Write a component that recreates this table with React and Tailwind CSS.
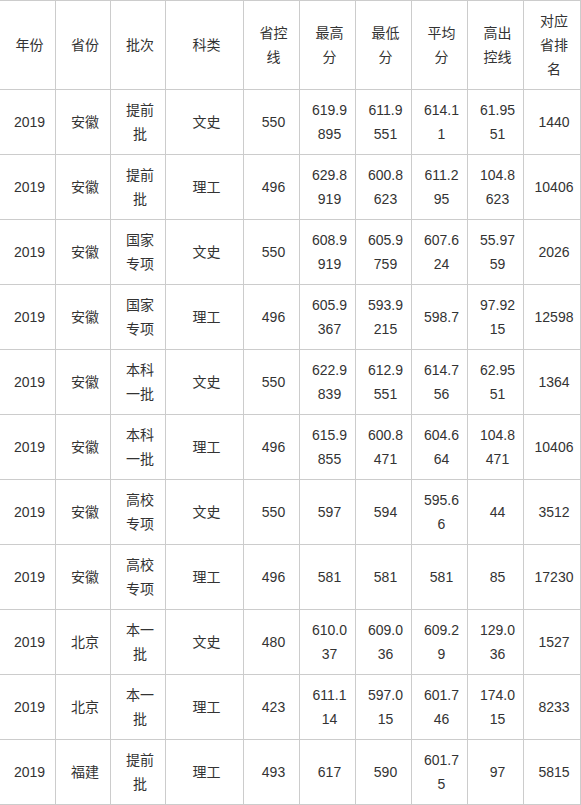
import React from 'react';

const headers = ['年份', '省份', '批次', '科类', '省控线', '最高分', '最低分', '平均分', '高出控线', '对应省排名'];

const rows = [
    ['2019', '安徽', '提前批', '文史', '550', '619.9895', '611.9551', '614.11', '61.9551', '1440'],
    ['2019', '安徽', '提前批', '理工', '496', '629.8919', '600.8623', '611.295', '104.8623', '10406'],
    ['2019', '安徽', '国家专项', '文史', '550', '608.9919', '605.9759', '607.624', '55.9759', '2026'],
    ['2019', '安徽', '国家专项', '理工', '496', '605.9367', '593.9215', '598.7', '97.9215', '12598'],
    ['2019', '安徽', '本科一批', '文史', '550', '622.9839', '612.9551', '614.756', '62.9551', '1364'],
    ['2019', '安徽', '本科一批', '理工', '496', '615.9855', '600.8471', '604.664', '104.8471', '10406'],
    ['2019', '安徽', '高校专项', '文史', '550', '597', '594', '595.66', '44', '3512'],
    ['2019', '安徽', '高校专项', '理工', '496', '581', '581', '581', '85', '17230'],
    ['2019', '北京', '本一批', '文史', '480', '610.037', '609.036', '609.29', '129.036', '1527'],
    ['2019', '北京', '本一批', '理工', '423', '611.114', '597.015', '601.746', '174.015', '8233'],
    ['2019', '福建', '提前批', '理工', '493', '617', '590', '601.75', '97', '5815'],
];

function Cell({ children, header }) {
    return (
        <div
            className={`flex items-center justify-center border-r border-b border-[#cccccc] pl-[10px] pr-[6px] text-center break-all leading-[24px] ${header ? 'h-[89px]' : 'h-[65px]'}`}
        >
            <span>{children}</span>
        </div>
    );
}

export default function App() {
    return (
        <div
            className="w-[581px] h-[805px] bg-white text-[14px] text-[#333333]"
            style={{ fontFamily: '"Liberation Sans", Arial, "Noto Sans CJK SC", sans-serif' }}
        >
            <div className="grid grid-cols-[56px_55px_55px_78px_56px_56px_56px_56px_56px_57px] border-t border-[#cccccc]">
                {headers.map((h) => (
                    <Cell key={h} header>{h}</Cell>
                ))}
                {rows.map((row, i) =>
                    row.map((v, j) => <Cell key={`${i}-${j}`}>{v}</Cell>)
                )}
            </div>
        </div>
    );
}
